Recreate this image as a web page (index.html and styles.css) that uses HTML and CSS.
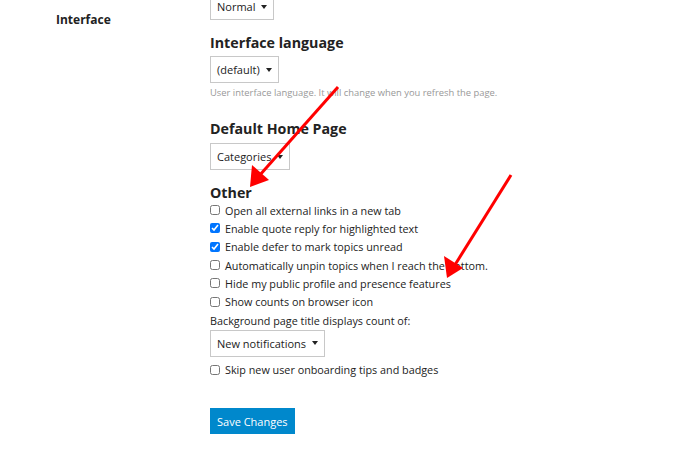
FILE: index.html
```html
<!DOCTYPE html>
<html lang="en">
<head>
<meta charset="utf-8">
<title>Interface preferences</title>
<link rel="stylesheet" href="styles.css">
</head>
<body>
<div class="page">
  <div class="side">
    <div class="side-label">Interface</div>
  </div>
  <div class="main">
    <div class="select select-top"><span>Normal</span><i class="caret"></i></div>

    <h3 class="heading h-lang">Interface language</h3>
    <div class="select"><span>(default)</span><i class="caret"></i></div>
    <p class="desc">User interface language. It will change when you refresh the page.</p>

    <h3 class="heading h-home">Default Home Page</h3>
    <div class="select"><span>Categories</span><i class="caret"></i></div>

    <h3 class="heading h-other">Other</h3>
    <label class="check"><input type="checkbox"><span>Open all external links in a new tab</span></label>
    <label class="check"><input type="checkbox" checked><span>Enable quote reply for highlighted text</span></label>
    <label class="check"><input type="checkbox" checked><span>Enable defer to mark topics unread</span></label>
    <label class="check"><input type="checkbox"><span>Automatically unpin topics when I reach the bottom.</span></label>
    <label class="check"><input type="checkbox"><span>Hide my public profile and presence features</span></label>
    <label class="check"><input type="checkbox"><span>Show counts on browser icon</span></label>
    <div class="plain">Background page title displays count of:</div>
    <div class="select"><span>New notifications</span><i class="caret"></i></div>
    <label class="check check-skip"><input type="checkbox"><span>Skip new user onboarding tips and badges</span></label>

    <button class="save">Save Changes</button>
  </div>
</div>
<svg class="arrows" width="690" height="467" viewBox="0 0 690 467">
  <line x1="338" y1="87" x2="259" y2="176" stroke="#f00" stroke-width="3"/>
  <polygon points="250,187 252,165 269,180" fill="#f00"/>
  <line x1="511" y1="175" x2="453" y2="268" stroke="#f00" stroke-width="3"/>
  <polygon points="447,278 444,256 463,268" fill="#f00"/>
</svg>
</body>
</html>
```
FILE: styles.css
```css
html, body {
  margin: 0;
  padding: 0;
  background: #fff;
}
body {
  font-family: "Open Sans", "Liberation Sans", sans-serif;
  color: #222;
  width: 690px;
  height: 467px;
  overflow: hidden;
  position: relative;
}
.page {
  display: flex;
}
.side {
  width: 210px;
  flex: none;
  padding-left: 56px;
  box-sizing: border-box;
}
.side-label {
  font-weight: 700;
  font-size: 12px;
  line-height: 18px;
  margin-top: 11px;
}
.main {
  display: flex;
  flex-direction: column;
  align-items: flex-start;
  margin-top: -7px;
}
.select {
  display: inline-flex;
  align-items: center;
  gap: 6px;
  height: 27px;
  box-sizing: border-box;
  border: 1px solid #c8c8c8;
  padding: 0 6px;
  font-size: 11px;
  color: #222;
  background: #fff;
}
.caret {
  width: 0;
  height: 0;
  border-left: 3.5px solid transparent;
  border-right: 3.5px solid transparent;
  border-top: 4px solid #222;
}
.heading {
  margin: 0;
  font-size: 14.25px;
  font-weight: 700;
  line-height: 20px;
}
.h-lang {
  margin-top: 13px;
  margin-bottom: 3px;
}
.desc {
  margin: 3px 0 0;
  font-size: 9.4px;
  line-height: 14px;
  color: #999;
}
.h-home {
  margin-top: 19px;
  margin-bottom: 4px;
}
.h-other {
  margin-top: 14px;
  line-height: 17px;
}
.check {
  display: flex;
  align-items: center;
  gap: 5px;
  font-size: 10.8px;
  height: 18.3px;
  color: #222;
}
.check input {
  margin: 0;
  width: 10px;
  height: 10px;
}
.plain {
  font-size: 10.8px;
  line-height: 18px;
  margin-top: 1px;
}
.check-skip {
  margin-top: 4px;
}
.save {
  margin-top: 29px;
  height: 26px;
  padding: 0 7px;
  border: none;
  background: #0088cc;
  color: #fff;
  font-family: "Open Sans", "Liberation Sans", sans-serif;
  font-size: 11px;
}
.arrows {
  position: absolute;
  left: 0;
  top: 0;
  pointer-events: none;
}
```
